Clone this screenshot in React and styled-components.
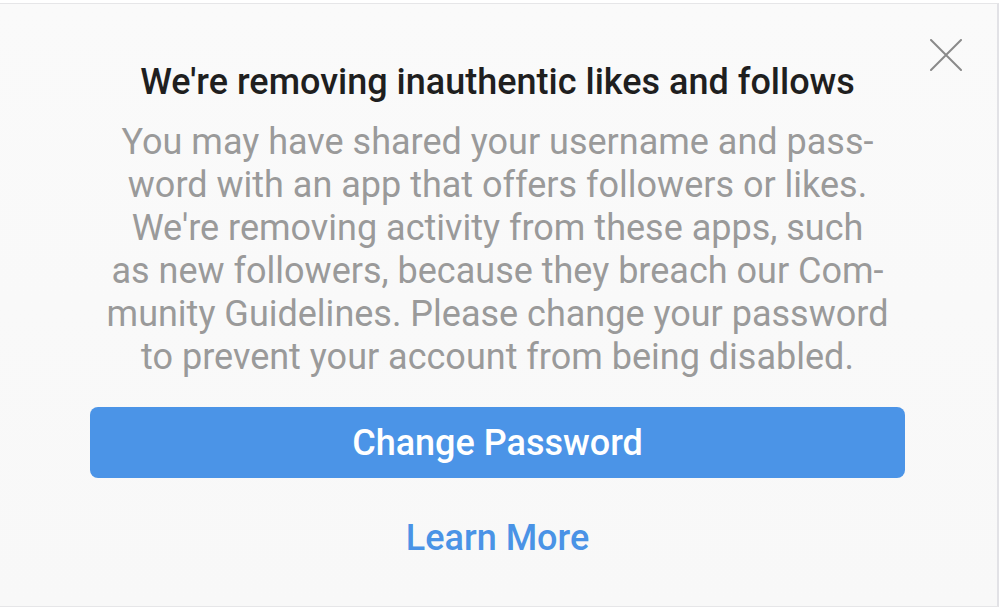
import React from "react";
import styled, { createGlobalStyle } from "styled-components";

const Global = createGlobalStyle`
  html, body { margin: 0; padding: 0; background: #ffffff; }
  body { font-family: Roboto, "Noto Sans", "Liberation Sans", sans-serif; }
`;

const Frame = styled.div`
  width: 1004px;
  height: 610px;
  box-sizing: border-box;
  padding-top: 3px;
  background: #ffffff;
  overflow: hidden;
`;

const Card = styled.div`
  position: relative;
  width: 999px;
  height: 604px;
  box-sizing: border-box;
  border-top: 1px solid #e6e6e8;
  border-right: 2px solid #e2e2e6;
  border-bottom: 1px solid #e6e6e8;
  background: linear-gradient(#fafafa, #f8f8f8);
  display: flex;
  flex-direction: column;
  align-items: center;
  padding: 54px 92px 0 90px;
`;

const Close = styled.button`
  position: absolute;
  top: 33px;
  right: 33px;
  width: 36px;
  height: 36px;
  padding: 0;
  border: 0;
  background: transparent;
  display: flex;
  align-items: center;
  justify-content: center;
`;

const Title = styled.h1`
  margin: 0;
  font-size: 36px;
  font-weight: 500;
  color: #1f1f1f;
  line-height: 48px;
  text-align: center;
  white-space: nowrap;
`;

const Body = styled.p`
  margin: 15px 0 0;
  font-size: 36px;
  line-height: 43px;
  color: #9a9a9a;
  text-align: center;
  white-space: nowrap;
`;

const Primary = styled.button`
  margin-top: 28px;
  width: 100%;
  height: 71px;
  border: 0;
  border-radius: 8px;
  background: #4b94e7;
  color: #ffffff;
  font-family: inherit;
  font-size: 36px;
  font-weight: 500;
`;

const Link = styled.a`
  margin-top: 39px;
  font-size: 36px;
  font-weight: 500;
  color: #4a93e6;
  text-decoration: none;
`;

export default function App() {
  return (
    <>
      <Global />
      <Frame>
        <Card>
          <Close aria-label="Close">
            <svg width="32" height="32" viewBox="0 0 32 32">
              <path d="M1 1 L31 31 M31 1 L1 31" stroke="#8a8a8a" strokeWidth="2" strokeLinecap="round" />
            </svg>
          </Close>
          <Title>We're removing inauthentic likes and follows</Title>
          <Body>
            You may have shared your username and pass-<br />
            word with an app that offers followers or likes.<br />
            We're removing activity from these apps, such<br />
            as new followers, because they breach our Com-<br />
            munity Guidelines. Please change your password<br />
            to prevent your account from being disabled.
          </Body>
          <Primary>Change Password</Primary>
          <Link>Learn More</Link>
        </Card>
      </Frame>
    </>
  );
}
